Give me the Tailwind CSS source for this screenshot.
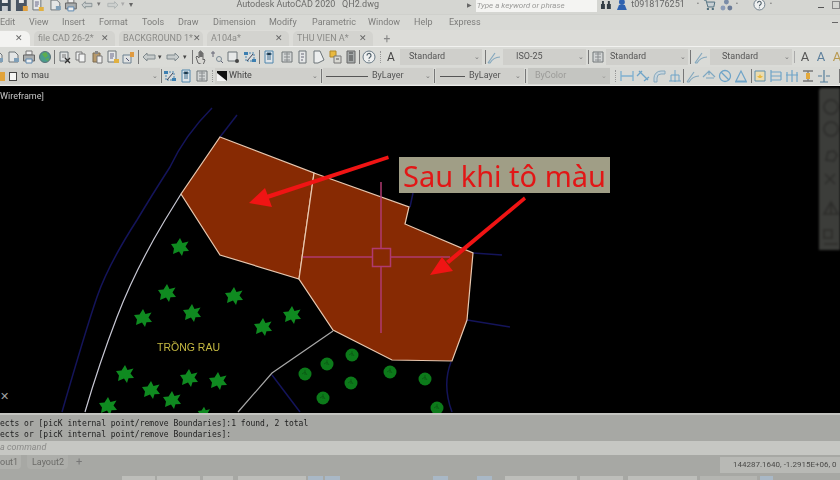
<!DOCTYPE html>
<html lang="en">
<head>
    <!-- Page setup -->
    <meta charset="UTF-8">
    <meta name="viewport" content="width=device-width, initial-scale=1.0">
    <title>AutoCAD 2020 - QH2.dwg</title>
    <!-- Styling library -->
    <script src="https://cdn.jsdelivr.net/npm/@tailwindcss/browser@4"></script>
</head>
<body class="w-[840px] h-[480px] overflow-hidden bg-black font-['Roboto','Liberation_Sans',sans-serif]">
    <!-- Shared toolbar icons -->
    <svg class="hidden">
        <defs>
            <symbol id="i-save" viewBox="0 0 14 14"><path d="M1 1h12v12H1z" fill="#3c4a58"/><path d="M4 1h6v4H4z" fill="#e8e8e8"/><path d="M4 8h6v5H4z" fill="#c8ccd0"/></symbol>
            <symbol id="i-saveas" viewBox="0 0 14 14"><path d="M1 1h11v12H1z" fill="#4a5664"/><path d="M4 1h5v4H4z" fill="#e8e8e8"/><path d="M8 8h5v5H8z" fill="#e0a040"/></symbol>
            <symbol id="i-doc" viewBox="0 0 14 14"><path d="M3 2h6l3 3v7H3z" fill="#e4e6e6" stroke="#6d7478"/><path d="M8 8h5v4H8z" fill="#7f9fb8"/></symbol>
            <symbol id="i-print" viewBox="0 0 14 14"><path d="M4 1h6v4H4z" fill="#eee" stroke="#777"/><path d="M1.500 5h11v6h-11z" fill="#a9adae" stroke="#666"/><path d="M4 9h6v4H4z" fill="#eee" stroke="#5d88b0"/></symbol>
            <symbol id="i-globe" viewBox="0 0 14 14"><circle cx="7" cy="7" r="5.500" fill="#4a9c8b" stroke="#5a7078"/><path d="M4 4l4-2 2 4-3 2zM7 9l4-1-1 3z" fill="#5fae4e"/></symbol>
            <symbol id="i-cut" viewBox="0 0 14 14"><path d="M2 2h8v9H2z" fill="#dfe2e2" stroke="#6c7478"/><path d="M4 5h4M4 7h4" stroke="#777"/><path d="M7 8l5 5M12 8l-5 5" stroke="#333" stroke-width="1.300"/></symbol>
            <symbol id="i-copy" viewBox="0 0 14 14"><path d="M2 2h6v8H2z" fill="#eceeee" stroke="#777"/><path d="M5 4h6v8H5z" fill="#f2f3f3" stroke="#777"/></symbol>
            <symbol id="i-paste" viewBox="0 0 14 14"><path d="M3 3h7v9H3z" fill="#b79a6c" stroke="#7a6a50"/><path d="M5 1h3v3H5z" fill="#888"/><path d="M7 6h5v7H7z" fill="#eee" stroke="#777"/></symbol>
            <symbol id="i-match" viewBox="0 0 14 14"><path d="M2 1h8v11H2z" fill="#e6e8e8" stroke="#6c7478"/><path d="M4 4h4M4 6h4M4 8h3" stroke="#668"/><path d="M8 9h5v4H8z" fill="#e0b040"/></symbol>
            <symbol id="i-block" viewBox="0 0 14 14"><path d="M1 5h8v8H1z" fill="#dfe2e2" stroke="#6c8090"/><path d="M8 2h4v5H8z" fill="#e09a40"/><path d="M4 8l3 3" stroke="#557"/></symbol>
            <symbol id="i-undo" viewBox="0 0 14 14"><path d="M1 7l4-4v2h8v4H5v2z" fill="#c7cccc" stroke="#808a8e"/></symbol>
            <symbol id="i-redo" viewBox="0 0 14 14"><path d="M13 7L9 3v2H1v4h8v2z" fill="#c7cccc" stroke="#808a8e"/></symbol>
            <symbol id="i-hand" viewBox="0 0 14 14"><path d="M4 13L2 7l1-1 2 2V2h1v5-6h1v6-5h1v5-4h1v7l1-1 1 1-2 5z" fill="#d8d8d4" stroke="#666"/></symbol>
            <symbol id="i-rt" viewBox="0 0 14 14"><path d="M3 1v6M1 3h4" stroke="#667" /><circle cx="9" cy="9" r="2.500" fill="none" stroke="#7a8a96"/><path d="M11 11l2 2" stroke="#667"/></symbol>
            <symbol id="i-win" viewBox="0 0 14 14"><path d="M2 2h9v9H2z" fill="#e6e8e8" stroke="#6c7478"/><circle cx="11" cy="11" r="2" fill="#444"/></symbol>
            <symbol id="i-ext" viewBox="0 0 14 14"><path d="M3 3h8v8H3z" fill="#d8dcdc" stroke="#4a86b0" stroke-dasharray="2 1"/><path d="M1 2h4v3H1zM9 9h4v3H9z" fill="#3d7fb0"/><path d="M4 11l6-7" stroke="#445"/></symbol>
            <symbol id="i-props" viewBox="0 0 14 14"><path d="M3 1h8v12H3z" fill="#dfe4e8" stroke="#4f86ad"/><path d="M5 3h4v2H5zM5 7h4M5 9h4" stroke="#3f6f90"/></symbol>
            <symbol id="i-center" viewBox="0 0 14 14"><path d="M2 2h10v10H2z" fill="#d3d6d6" stroke="#707678"/><path d="M4 4h6M4 7h6M4 10h6M7 2v10" stroke="#8a8e90"/></symbol>
            <symbol id="i-tool" viewBox="0 0 14 14"><path d="M3 1h7v12H3z" fill="#e6e8e8" stroke="#6c7478"/><path d="M5 4h3M5 7h3M5 10h2" stroke="#667"/></symbol>
            <symbol id="i-sheet" viewBox="0 0 14 14"><path d="M2 1h6l4 9-6 3H2z" fill="#eceeee" stroke="#6c7478"/></symbol>
            <symbol id="i-mark" viewBox="0 0 14 14"><path d="M2 1h6v6H2z" fill="#e9b93e" stroke="#b0882a"/><path d="M6 6h7v7H6z" fill="#d8d8d2" stroke="#777"/><path d="M8 9h3" stroke="#555"/></symbol>
            <symbol id="i-calc" viewBox="0 0 14 14"><path d="M3 1h8v12H3z" fill="#a6aaaa" stroke="#666"/><path d="M5 3h4M5 6h4M5 8h4M5 10h4" stroke="#444"/></symbol>
            <symbol id="i-help" viewBox="0 0 14 14"><circle cx="7" cy="7" r="6" fill="#eef0f0" stroke="#6a7a86"/><path d="M5 5.500a2 2 0 1 1 3 1.700c-.7.400-1 .8-1 1.600M7 10.200v1" fill="none" stroke="#4c5c66" stroke-width="1.200"/></symbol>
            <symbol id="i-dl" viewBox="0 0 14 14"><path d="M1 2v10M13 2v10M1 7h12" fill="none" stroke="#7fb0d0" stroke-width="1.300"/></symbol>
            <symbol id="i-da" viewBox="0 0 14 14"><path d="M3 2l9 9M1 7l5-5M8 12l5-4" fill="none" stroke="#6fa4c8" stroke-width="1.300"/></symbol>
            <symbol id="i-dc" viewBox="0 0 14 14"><path d="M2 13V9a7 7 0 0 1 7-7h4v3H9a4 4 0 0 0-4 4v4z" fill="#c8d6de" stroke="#85a8be"/></symbol>
            <symbol id="i-do" viewBox="0 0 14 14"><path d="M1 12h12M7 1v12M3 6h8M3 12V6M11 12V6" fill="none" stroke="#6fa4c8"/></symbol>
            <symbol id="i-dr" viewBox="0 0 14 14"><path d="M1 13L8 3M1 13h2a12 12 0 0 1 10-6" fill="none" stroke="#85a8be" stroke-width="1.200"/></symbol>
            <symbol id="i-dj" viewBox="0 0 14 14"><path d="M1 8l6-6 6 6M7 2v4M4 9h8" fill="none" stroke="#7fa8c2" stroke-width="1.200"/></symbol>
            <symbol id="i-dn" viewBox="0 0 14 14"><circle cx="7" cy="7" r="5.500" fill="none" stroke="#6fa4c8" stroke-width="1.300"/><path d="M3 3l8 8" stroke="#6fa4c8" stroke-width="1.300"/></symbol>
            <symbol id="i-dt" viewBox="0 0 14 14"><path d="M7 2L2 12h10zM1 13h12" fill="none" stroke="#6fa4c8" stroke-width="1.200"/></symbol>
            <symbol id="i-qd" viewBox="0 0 14 14"><path d="M2 2h10v10H2z" fill="#ecdcae" stroke="#5f8fae"/><path d="M7 5l1 2h2L8 9H6L4 7h2z" fill="#e9b93e"/></symbol>
            <symbol id="i-db" viewBox="0 0 14 14"><path d="M2 1v12M12 3H2M12 7H2M12 11H2M12 3v8" fill="none" stroke="#6fa4c8" stroke-width="1.200"/></symbol>
            <symbol id="i-dq" viewBox="0 0 14 14"><path d="M2 3v10M7 1v12M12 3v10M1 6h12" fill="none" stroke="#6fa4c8" stroke-width="1.200"/></symbol>
            <symbol id="i-ds" viewBox="0 0 14 14"><path d="M2 2h10M2 12h10M7 2v10" stroke="#777" stroke-width="1.300"/><path d="M5 4h4v6H5z" fill="#e3a93c"/></symbol>
            <symbol id="i-dp" viewBox="0 0 14 14"><path d="M7 1v12M3 13h8M1 7h4M9 7h4" stroke="#557f9c" stroke-width="1.200"/></symbol>
            <symbol id="plant" viewBox="-10 -10 20 20"><path d="M0-9l2.500 5 6-1.500-3 5 3.500 4.500-5.500.3L2 9-1 4.500-7 7l1-5.500L-9-3l5.500-.5z" fill="#0f8a20"/></symbol>
            <symbol id="tree" viewBox="-7 -7 14 14"><circle r="6.500" fill="#0c7a1a"/><path d="M-3 0l3-2 2 3M0-4v5" stroke="#0a5f15" fill="none"/></symbol>
        </defs>
    </svg>

    <div class="w-[840px] h-[480px] flex flex-col">
        <!-- Window chrome -->
        <div class="flex flex-col shrink-0 h-[86px] bg-[#d8d9d5] blur-[0.4px]">
            <!-- Title bar -->
            <div class="h-[14px] relative overflow-hidden bg-[#d5d6d2]">
                <div class="h-[9px] flex items-center leading-none">
                    <svg class="w-[14px] h-[14px] ml-[-2px]"><use href="#i-save"/></svg>
                    <svg class="w-[14px] h-[14px] ml-[3px]"><use href="#i-saveas"/></svg>
                    <svg class="w-[14px] h-[14px] ml-[2px]"><use href="#i-match"/></svg>
                    <svg class="w-[14px] h-[14px] ml-[4px]"><use href="#i-doc"/></svg>
                    <svg class="w-[14px] h-[14px] ml-[2px]"><use href="#i-print"/></svg>
                    <svg class="w-[12px] h-[12px] ml-[3px]"><use href="#i-undo"/></svg>
                    <span class="ml-[4px] text-[7px] text-[#777]">▾</span>
                    <svg class="w-[12px] h-[12px] ml-[6px] opacity-50"><use href="#i-redo"/></svg>
                    <span class="ml-[3px] text-[7px] text-[#aaa]">▾</span>
                    <span class="ml-[4px] text-[8px] text-[#666]">▾</span>
                    <span class="ml-[103px] w-[160px] text-[9px] text-[#6c6c6a] whitespace-nowrap">Autodesk AutoCAD 2020&nbsp;&nbsp;&nbsp;QH2.dwg</span>
                    <span class="ml-[73px] text-[6px] text-[#666]">▶</span>
                    <span class="ml-[4px] w-[123px] h-[12px] mt-[3px] bg-[#f4f4f2] pl-[1px] text-[8px] leading-[12px] italic text-[#9a9a98] whitespace-nowrap">Type a keyword or phrase</span>
                    <svg class="w-[12px] h-[10px] ml-[3px]" viewBox="0 0 12 10"><path d="M1 4h4v5H1zM7 4h4v5H7zM2 1h2v3H2zM8 1h2v3H8z" fill="#333d44"/></svg>
                    <svg class="w-[12px] h-[12px] ml-[5px]" viewBox="0 0 12 12"><circle cx="6" cy="3" r="3" fill="#2f62b0"/><path d="M1 11l2-5h6l2 5z" fill="#2f62b0"/></svg>
                    <span class="ml-[3px] text-[9px] text-[#666]">t0918176251</span>
                    <span class="ml-[12px] text-[7px] text-[#777]">•</span>
                    <svg class="w-[13px] h-[12px] ml-[4px]" viewBox="0 0 13 12"><path d="M1 1h2l2 7h6l1-5H4" fill="#c8d0d4" stroke="#52707e"/><circle cx="5" cy="10" r="1.200" fill="#52707e"/><circle cx="10" cy="10" r="1.200" fill="#52707e"/></svg>
                    <svg class="w-[13px] h-[12px] ml-[4px]" viewBox="0 0 13 12"><circle cx="6.500" cy="3" r="2.500" fill="#7a8ca8"/><circle cx="3" cy="9" r="2.500" fill="#8c9cb8"/><circle cx="10" cy="9" r="2.500" fill="#6c7c98"/></svg>
                    <span class="ml-[3px] text-[7px] text-[#777]">•</span>
                    <svg class="w-[13px] h-[13px] ml-[15px]"><use href="#i-help"/></svg>
                    <span class="ml-[4px] text-[7px] text-[#777]">•</span>
                    <span class="ml-[46px] w-[6px] h-[1px] mt-[5px] bg-[#555]"></span>
                    <span class="ml-[8px] w-[8px] h-[8px] border border-[#888]"></span>
                </div>
            </div>
            <!-- Menu bar -->
            <div class="h-[16px] flex items-center text-[9px] text-[#7c7c7a] whitespace-nowrap border-t border-[#cfd0cc]">
                <span class="w-[29px] shrink-0">Edit</span>
                <span class="w-[33px] shrink-0">View</span>
                <span class="w-[37px] shrink-0">Insert</span>
                <span class="w-[43px] shrink-0">Format</span>
                <span class="w-[36px] shrink-0">Tools</span>
                <span class="w-[35px] shrink-0">Draw</span>
                <span class="w-[56px] shrink-0">Dimension</span>
                <span class="w-[43px] shrink-0">Modify</span>
                <span class="w-[56px] shrink-0">Parametric</span>
                <span class="w-[46px] shrink-0">Window</span>
                <span class="w-[35px] shrink-0">Help</span>
                <span class="w-[50px] shrink-0">Express</span>
                <span class="ml-auto mr-[2px] w-[6px] h-[1px] bg-[#666]"></span>
            </div>
            <!-- File tabs -->
            <div class="h-[16px] flex items-end bg-[#dcdcd8] text-[9px] text-[#8b8b88] whitespace-nowrap">
                <div class="w-[30px] h-[15px] bg-[#f3f3f1] rounded-tr-[6px] flex items-center justify-end pr-[7px] text-[#666]">✕</div>
                <div class="ml-[4px] w-[81px] h-[15px] bg-[#d3d3cf] rounded-t-[5px] flex items-center justify-between pl-[4px] pr-[6px]"><span>file CAD 26-2*</span><span class="text-[#666]">✕</span></div>
                <div class="ml-[4px] w-[84px] h-[15px] bg-[#d3d3cf] rounded-t-[5px] flex items-center justify-between pl-[4px] pr-[2px]"><span>BACKGROUND 1*</span><span class="text-[#666]">✕</span></div>
                <div class="ml-[4px] w-[82px] h-[15px] bg-[#d3d3cf] rounded-t-[5px] flex items-center justify-between pl-[4px] pr-[6px]"><span>A104a*</span><span class="text-[#666]">✕</span></div>
                <div class="ml-[4px] w-[80px] h-[15px] bg-[#d3d3cf] rounded-t-[5px] flex items-center justify-between pl-[4px] pr-[6px]"><span>THU VIEN A*</span><span class="text-[#666]">✕</span></div>
                <div class="ml-[6px] w-[16px] h-[15px] flex items-center justify-center text-[12px] text-[#888]">+</div>
            </div>
            <!-- Standard toolbar -->
            <div class="h-[21px] flex items-center text-[9px] text-[#555] whitespace-nowrap border-t border-[#f2f2f0] bg-[#dadbd7] overflow-hidden">
                <svg class="w-[16px] h-[14px] shrink-0 ml-[-11px]"><use href="#i-doc"/></svg>
                <svg class="w-[16px] h-[14px] shrink-0"><use href="#i-doc"/></svg>
                <svg class="w-[16px] h-[14px] shrink-0"><use href="#i-print"/></svg>
                <svg class="w-[16px] h-[14px] shrink-0"><use href="#i-globe"/></svg>
                <span class="w-[1px] h-[14px] ml-[1px] shrink-0 bg-[#777]"></span>
                <svg class="w-[16px] h-[14px] shrink-0 ml-[2px]"><use href="#i-cut"/></svg>
                <svg class="w-[16px] h-[14px] shrink-0"><use href="#i-copy"/></svg>
                <svg class="w-[16px] h-[14px] shrink-0"><use href="#i-paste"/></svg>
                <svg class="w-[16px] h-[14px] shrink-0"><use href="#i-match"/></svg>
                <svg class="w-[16px] h-[14px] shrink-0"><use href="#i-block"/></svg>
                <span class="w-[1px] h-[14px] ml-[1px] shrink-0 bg-[#777]"></span>
                <svg class="w-[16px] h-[14px] shrink-0 ml-[2px]"><use href="#i-undo"/></svg>
                <span class="w-[6px] ml-[1px] shrink-0 text-[7px] text-[#444]">▾</span>
                <svg class="w-[16px] h-[14px] shrink-0 ml-[1px]"><use href="#i-redo"/></svg>
                <span class="w-[6px] ml-[2px] shrink-0 text-[7px] text-[#444]">▾</span>
                <span class="w-[1px] h-[14px] ml-[3px] shrink-0 bg-[#777]"></span>
                <svg class="w-[16px] h-[14px] shrink-0"><use href="#i-hand"/></svg>
                <svg class="w-[16px] h-[14px] shrink-0"><use href="#i-rt"/></svg>
                <svg class="w-[16px] h-[14px] shrink-0"><use href="#i-win"/></svg>
                <svg class="w-[16px] h-[14px] shrink-0 ml-[1px]"><use href="#i-ext"/></svg>
                <span class="w-[1px] h-[14px] ml-[1px] shrink-0 bg-[#777]"></span>
                <svg class="w-[16px] h-[14px] shrink-0 ml-[1px]"><use href="#i-props"/></svg>
                <svg class="w-[16px] h-[14px] shrink-0 ml-[2px]"><use href="#i-center"/></svg>
                <svg class="w-[16px] h-[14px] shrink-0"><use href="#i-tool"/></svg>
                <svg class="w-[16px] h-[14px] shrink-0"><use href="#i-sheet"/></svg>
                <svg class="w-[16px] h-[14px] shrink-0"><use href="#i-mark"/></svg>
                <svg class="w-[16px] h-[14px] shrink-0"><use href="#i-calc"/></svg>
                <span class="w-[1px] h-[14px] shrink-0 bg-[#777]"></span>
                <svg class="w-[16px] h-[14px] shrink-0 ml-[1px]"><use href="#i-help"/></svg>
                <span class="w-[1px] h-[12px] ml-[3px] shrink-0 border-l border-dotted border-[#999]"></span>
                <span class="w-[16px] ml-[2px] shrink-0 text-center text-[12px] text-[#444]">A</span>
                <div class="w-[82px] h-[16px] ml-[1px] shrink-0 bg-[#cfcfcb] flex items-center justify-between pl-[9px] pr-[2px]"><span>Standard</span><span class="text-[7px] text-[#777]">⌄</span></div>
                <span class="w-[1px] h-[14px] ml-[3px] shrink-0 bg-[#777]"></span>
                <svg class="w-[16px] h-[14px] shrink-0"><use href="#i-dr"/></svg>
                <div class="w-[83px] h-[16px] ml-[1px] shrink-0 bg-[#cfcfcb] flex items-center justify-between pl-[13px] pr-[2px]"><span>ISO-25</span><span class="text-[7px] text-[#777]">⌄</span></div>
                <span class="w-[1px] h-[14px] ml-[2px] shrink-0 bg-[#777]"></span>
                <svg class="w-[16px] h-[14px] shrink-0 ml-[1px]"><use href="#i-center"/></svg>
                <div class="w-[82px] h-[16px] shrink-0 bg-[#cfcfcb] flex items-center justify-between pl-[4px] pr-[2px]"><span>Standard</span><span class="text-[7px] text-[#777]">⌄</span></div>
                <span class="w-[1px] h-[14px] ml-[2px] shrink-0 bg-[#777]"></span>
                <svg class="w-[16px] h-[14px] shrink-0 ml-[2px]"><use href="#i-dr"/></svg>
                <div class="w-[82px] h-[16px] ml-[1px] shrink-0 bg-[#cfcfcb] flex items-center justify-between pl-[12px] pr-[2px]"><span>Standard</span><span class="text-[7px] text-[#777]">⌄</span></div>
                <span class="w-[1px] h-[12px] ml-[2px] shrink-0 bg-[#aaa]"></span>
                <span class="w-[16px] ml-[2px] shrink-0 text-center text-[13px] text-[#555]">A</span>
                <span class="w-[16px] shrink-0 text-center text-[13px] text-[#5c7f9c]">A</span>
                <span class="w-[16px] shrink-0 text-center text-[13px] text-[#b89a50]">A</span>
            </div>
            <!-- Layer and dimension toolbar -->
            <div class="h-[19px] flex items-center text-[9px] text-[#555] whitespace-nowrap border-b border-[#ebebe9] overflow-hidden">
                <div class="w-[160px] h-[16px] shrink-0 bg-[#cfcfcb] flex items-center pr-[2px]">
                    <span class="w-[5px] h-[9px] bg-[#e2a33a]"></span>
                    <span class="w-[8px] h-[9px] ml-[4px] bg-[#f6f6f4] border border-[#444]"></span>
                    <span class="ml-[4px] text-[#444]">to mau</span>
                    <span class="ml-auto text-[7px] text-[#777]">⌄</span>
                </div>
                <span class="w-[1px] h-[14px] ml-[1px] shrink-0 bg-[#777]"></span>
                <svg class="w-[16px] h-[14px] shrink-0"><use href="#i-ext"/></svg>
                <svg class="w-[16px] h-[14px] shrink-0"><use href="#i-props"/></svg>
                <svg class="w-[16px] h-[14px] shrink-0"><use href="#i-center"/></svg>
                <span class="w-[1px] h-[12px] ml-[2px] shrink-0 border-l border-dotted border-[#999]"></span>
                <div class="w-[105px] h-[16px] ml-[2px] shrink-0 bg-[#cfcfcb] flex items-center pr-[2px]">
                    <svg class="w-[10px] h-[10px] ml-[2px]" viewBox="0 0 10 10"><path d="M0 0h10v10H0z" fill="#111"/><path d="M10 10H0V2z" fill="#f4f4f4"/></svg>
                    <span class="ml-[2px] text-[#444]">White</span>
                    <span class="ml-auto text-[7px] text-[#777]">⌄</span>
                </div>
                <span class="w-[1px] h-[14px] ml-[1px] shrink-0 bg-[#777]"></span>
                <div class="w-[110px] h-[16px] ml-[1px] shrink-0 bg-[#cfcfcb] flex items-center pr-[2px]">
                    <span class="w-[42px] h-[1px] ml-[3px] bg-[#555]"></span>
                    <span class="ml-[4px]">ByLayer</span>
                    <span class="ml-auto text-[7px] text-[#777]">⌄</span>
                </div>
                <span class="w-[1px] h-[14px] ml-[1px] shrink-0 bg-[#777]"></span>
                <div class="w-[88px] h-[16px] ml-[1px] shrink-0 bg-[#cfcfcb] flex items-center pr-[3px]">
                    <span class="w-[25px] h-[1px] ml-[4px] bg-[#555]"></span>
                    <span class="ml-[4px]">ByLayer</span>
                    <span class="ml-auto text-[7px] text-[#777]">⌄</span>
                </div>
                <span class="w-[1px] h-[14px] ml-[1px] shrink-0 bg-[#777]"></span>
                <div class="w-[82px] h-[16px] ml-[2px] shrink-0 bg-[#c4c5c1] flex items-center pl-[7px] pr-[3px] text-[#9b9b98]"><span>ByColor</span><span class="ml-auto text-[7px]">⌄</span></div>
                <span class="w-[1px] h-[12px] ml-[5px] shrink-0 border-l border-dotted border-[#999]"></span>
                <svg class="w-[16px] h-[14px] shrink-0 ml-[3px]"><use href="#i-dl"/></svg>
                <svg class="w-[16px] h-[14px] shrink-0"><use href="#i-da"/></svg>
                <svg class="w-[16px] h-[14px] shrink-0"><use href="#i-dc"/></svg>
                <svg class="w-[16px] h-[14px] shrink-0"><use href="#i-do"/></svg>
                <span class="w-[1px] h-[14px] shrink-0 bg-[#777]"></span>
                <svg class="w-[16px] h-[14px] shrink-0 ml-[1px]"><use href="#i-dr"/></svg>
                <svg class="w-[16px] h-[14px] shrink-0"><use href="#i-dj"/></svg>
                <svg class="w-[16px] h-[14px] shrink-0"><use href="#i-dn"/></svg>
                <svg class="w-[16px] h-[14px] shrink-0"><use href="#i-dt"/></svg>
                <span class="w-[1px] h-[14px] ml-[2px] shrink-0 bg-[#777]"></span>
                <svg class="w-[16px] h-[14px] shrink-0"><use href="#i-qd"/></svg>
                <svg class="w-[16px] h-[14px] shrink-0"><use href="#i-db"/></svg>
                <svg class="w-[16px] h-[14px] shrink-0"><use href="#i-dq"/></svg>
                <svg class="w-[16px] h-[14px] shrink-0"><use href="#i-ds"/></svg>
                <svg class="w-[16px] h-[14px] shrink-0"><use href="#i-dp"/></svg>
                <span class="w-[1px] h-[14px] ml-[7px] shrink-0 bg-[#777]"></span>
            </div>
        </div>

        <!-- Drawing area -->
        <div class="relative h-[327px] shrink-0 bg-black overflow-hidden">
            <svg class="absolute inset-0 w-[840px] h-[327px] blur-[0.3px]" viewBox="0 86 840 327">
                <!-- Roads -->
                <g fill="none" stroke="#14145a" stroke-width="1.500">
                    <path d="M212 108Q185 135 170 167Q152 195 137 220Q108 265 97 297T62 412"/>
                    <path d="M237 115L220 137"/>
                    <path d="M410 207L413 193M473 253L502 255M467 320L510 327M272 375L300 412M451 362Q442 385 452 412"/>
                </g>
                <path d="M181 194L165 220Q135 270 117 317T85 412" fill="none" stroke="#c8c8d4" stroke-width="1.200"/>
                <path d="M333 331L272 373L238 412" fill="none" stroke="#a8a8a8" stroke-width="1.200"/>
                <!-- Filled parcels -->
                <path d="M220 137L314 173L299 279L220 255L181 194Z" fill="#872a03" stroke="#e8c8b0" stroke-width="1.200"/>
                <path d="M314 173L409 207L405 224L473 253L467 320L452 361L392 360L333 330L299 279Z" fill="#872a03" stroke="#e8c8b0" stroke-width="1.200"/>
                <!-- Crosshair -->
                <g fill="none" stroke="#b03a70" stroke-width="1.500">
                    <path d="M381 182V248M381 267V333M303 257H372M391 257H450"/>
                    <path d="M372.500 248.500h18v18h-18z"/>
                </g>
                <!-- Plants -->
                <g>
                    <use href="#plant" x="170" y="237" width="20" height="20"/>
                    <use href="#plant" x="157" y="283" width="20" height="20"/>
                    <use href="#plant" x="133" y="308" width="20" height="20"/>
                    <use href="#plant" x="182" y="303" width="20" height="20"/>
                    <use href="#plant" x="224" y="286" width="20" height="20"/>
                    <use href="#plant" x="282" y="305" width="20" height="20"/>
                    <use href="#plant" x="253" y="317" width="20" height="20"/>
                    <use href="#plant" x="115" y="364" width="20" height="20"/>
                    <use href="#plant" x="179" y="368" width="20" height="20"/>
                    <use href="#plant" x="208" y="371" width="20" height="20"/>
                    <use href="#plant" x="141" y="380" width="20" height="20"/>
                    <use href="#plant" x="162" y="390" width="20" height="20"/>
                    <use href="#plant" x="98" y="396" width="20" height="20"/>
                    <use href="#plant" x="197" y="406" width="14" height="14"/>
                </g>
                <g>
                    <use href="#tree" x="345" y="348" width="14" height="14"/>
                    <use href="#tree" x="320" y="357" width="14" height="14"/>
                    <use href="#tree" x="298" y="367" width="14" height="14"/>
                    <use href="#tree" x="344" y="376" width="14" height="14"/>
                    <use href="#tree" x="383" y="365" width="14" height="14"/>
                    <use href="#tree" x="418" y="372" width="14" height="14"/>
                    <use href="#tree" x="316" y="391" width="14" height="14"/>
                    <use href="#tree" x="430" y="401" width="14" height="14"/>
                </g>
                <text x="157" y="351" font-family="Liberation Sans, sans-serif" font-size="10.500" fill="#c6ba42">TRỒNG RAU</text>
                <!-- Red annotation arrows -->
                <g fill="#f01414" stroke="none">
                    <path d="M388 155.500L389 159L265 200L263 196Z"/>
                    <path d="M249 203L265 188L272 207Z"/>
                    <path d="M524 196.500L526 199.500L449 264L446 261Z"/>
                    <path d="M430 275L442 257L453 271Z"/>
                </g>
            </svg>
            <!-- Viewport label -->
            <span class="absolute left-0 top-[4px] text-[9px] text-[#c8c8c8] blur-[0.3px]">Wireframe]</span>
            <!-- UCS axis label -->
            <span class="absolute left-0 top-[304px] text-[11px] leading-[14px] text-[#a0a0a0]">✕</span>
            <!-- Annotation label -->
            <div class="absolute left-[399px] top-[71px] w-[211px] h-[36px] bg-[#a09e86] flex items-center justify-center font-['Noto_Sans',sans-serif] text-[29px] leading-none text-[#e21616] whitespace-nowrap blur-[0.3px]">Sau khi tô màu</div>
            <!-- Navigation bar -->
            <div class="absolute right-0 top-[2px] w-[21px] h-[162px] rounded-tl-[3px] bg-[#3c3d3a] blur-[0.8px]">
                <svg class="w-[21px] h-[162px]" viewBox="0 0 21 162" fill="none" stroke="#2c2c2a" stroke-width="1.500">
                    <circle cx="12" cy="19" r="7"/>
                    <circle cx="12" cy="41" r="7"/>
                    <path d="M7 72l2-8 6-1 3 4-3 6z"/>
                    <path d="M6 86l10 10M16 86L6 96"/>
                    <path d="M5 126h14l-7-12zM12 114v12"/>
                    <path d="M5 142h8v8H5zM5 156h14"/>
                </svg>
            </div>
        </div>

        <!-- Command line and status -->
        <div class="flex flex-col h-[67px] shrink-0 bg-[#a7a8a4] blur-[0.4px]">
            <div class="h-[28px] pt-[3px] border-t-2 border-[#c4c4c0] font-['DejaVu_Sans_Mono','Liberation_Mono',monospace] text-[8px] leading-[11px] text-[#1c1c1c] whitespace-nowrap">
                <div>ects or [picK internal point/remove Boundaries]:1 found, 2 total</div>
                <div>ects or [picK internal point/remove Boundaries]:</div>
            </div>
            <div class="h-[14px] bg-[#c6c7c3] flex items-center text-[9px] italic text-[#8a8a88]">a command</div>
            <div class="h-[21px] flex items-start text-[9px] text-[#6b6b68] whitespace-nowrap">
                <span class="w-[21px] h-[14px] bg-[#b0b1ad] rounded-br-[4px] leading-[14px]">out1</span>
                <span class="w-[41px] h-[14px] ml-[6px] pl-[5px] bg-[#adaeaa] rounded-b-[4px] leading-[14px]">Layout2</span>
                <span class="w-[14px] ml-[4px] text-center text-[11px] leading-[14px] text-[#777]">+</span>
                <span class="ml-auto w-[120px] h-[16px] mt-[2px] pl-[13px] bg-[#b8b9b5] text-[8px] leading-[16px] text-[#4a4a48]">144287.1640, -1.2915E+06, 0</span>
            </div>
            <!-- Status bar tops -->
            <div class="h-[4px] flex overflow-hidden">
                <span class="w-[33px] ml-[122px] bg-[#bdbeba]"></span>
                <span class="w-[43px] ml-[2px] bg-[#bdbeba]"></span>
                <span class="w-[30px] ml-[3px] bg-[#bdbeba]"></span>
                <span class="w-[68px] ml-[5px] bg-[#bdbeba]"></span>
                <span class="w-[15px] ml-[2px] bg-[#a9b8c6]"></span>
                <span class="w-[15px] ml-[2px] bg-[#a9b8c6]"></span>
                <span class="w-[15px] ml-[93px] bg-[#a9b8c6]"></span>
                <span class="w-[15px] ml-[29px] bg-[#a9b8c6]"></span>
                <span class="w-[72px] ml-[13px] bg-[#bdbeba]"></span>
                <span class="w-[43px] ml-[3px] bg-[#bdbeba]"></span>
                <span class="w-[69px] ml-[5px] bg-[#bdbeba]"></span>
                <span class="w-[57px] ml-[3px] bg-[#b4b5b1]"></span>
                <span class="w-[13px] ml-[3px] bg-[#a9b8c6]"></span>
            </div>
        </div>
    </div>
</body>
</html>
